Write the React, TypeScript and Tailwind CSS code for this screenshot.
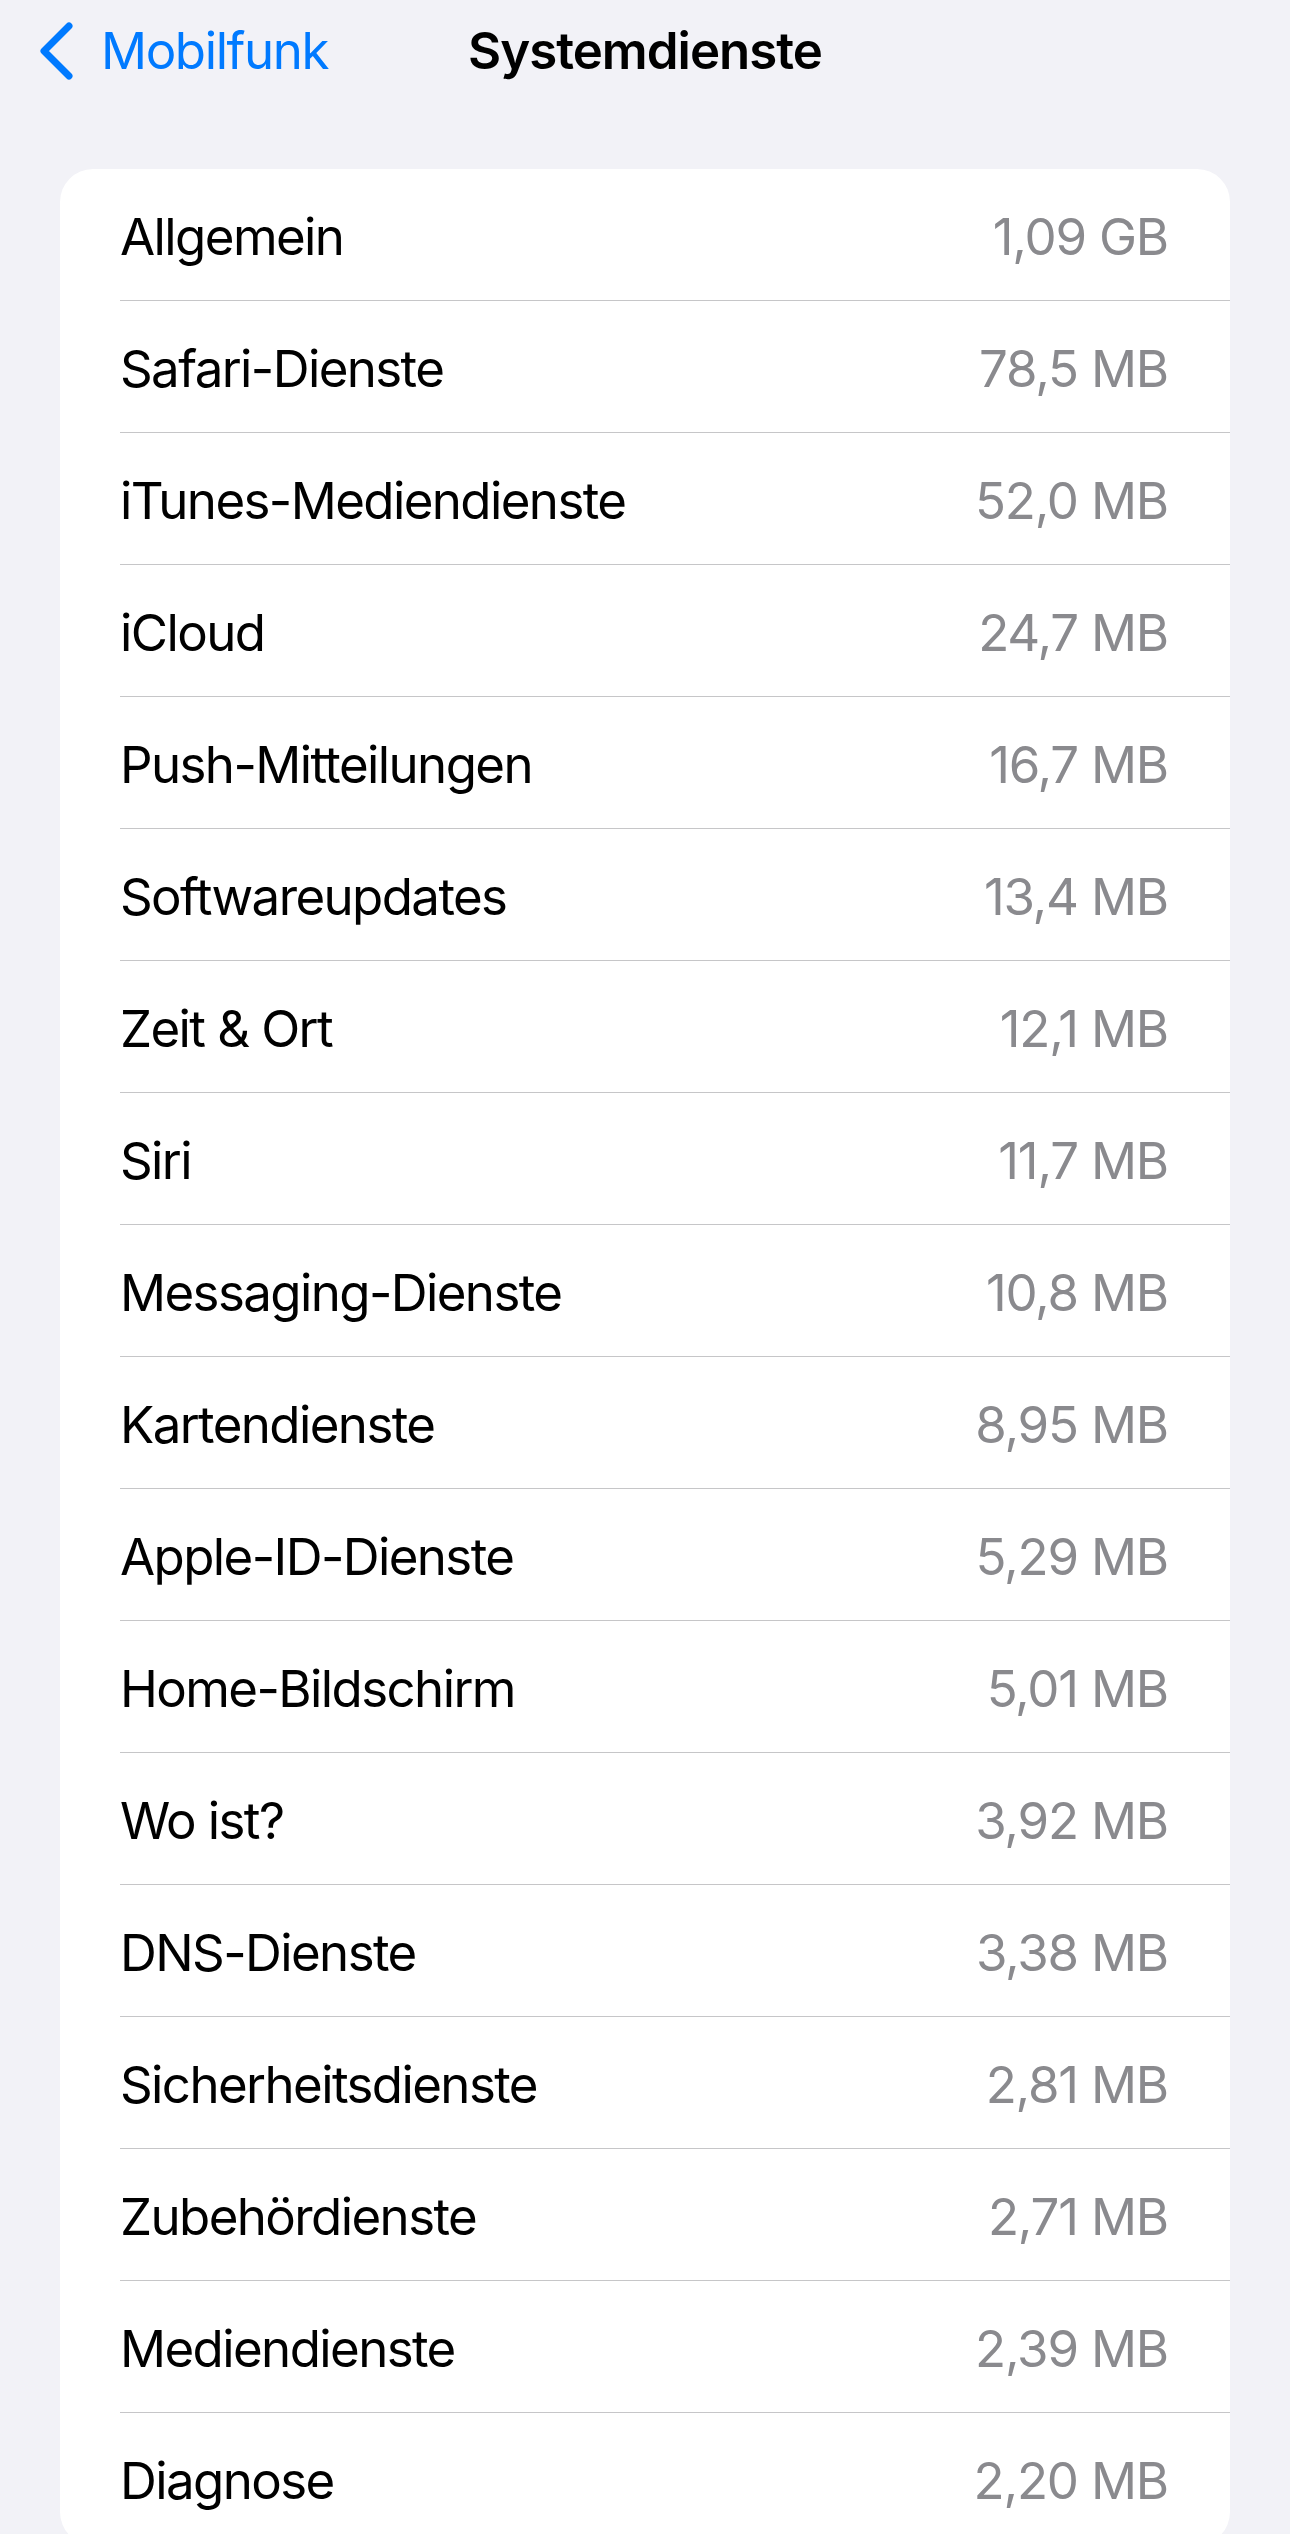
import React from "react";

const rows: [string, string][] = [
  ["Allgemein", "1,09 GB"],
  ["Safari-Dienste", "78,5 MB"],
  ["iTunes-Mediendienste", "52,0 MB"],
  ["iCloud", "24,7 MB"],
  ["Push-Mitteilungen", "16,7 MB"],
  ["Softwareupdates", "13,4 MB"],
  ["Zeit & Ort", "12,1 MB"],
  ["Siri", "11,7 MB"],
  ["Messaging-Dienste", "10,8 MB"],
  ["Kartendienste", "8,95 MB"],
  ["Apple-ID-Dienste", "5,29 MB"],
  ["Home-Bildschirm", "5,01 MB"],
  ["Wo ist?", "3,92 MB"],
  ["DNS-Dienste", "3,38 MB"],
  ["Sicherheitsdienste", "2,81 MB"],
  ["Zubehördienste", "2,71 MB"],
  ["Mediendienste", "2,39 MB"],
  ["Diagnose", "2,20 MB"],
];

export default function App() {
  return (
    <div
      className="w-[1290px] h-[2534px] overflow-hidden bg-[#f2f2f7] text-black"
      style={{ fontFamily: "Inter, 'Noto Sans', sans-serif" }}
    >
      <div className="pt-[20px] h-[80px] grid grid-cols-[1fr_auto_1fr] items-center">
        <div className="flex items-center">
          <svg width="40" height="60" viewBox="0 0 40 60" className="ml-[36px] shrink-0">
            <polyline
              points="33,5 8,30 33,55"
              fill="none"
              stroke="#007aff"
              strokeWidth="7"
              strokeLinecap="round"
              strokeLinejoin="round"
            />
          </svg>
          <span className="ml-[25px] text-[51px] leading-[61px] text-[#007aff] tracking-[-1.4px]">
            Mobilfunk
          </span>
        </div>
        <div className="text-[51px] leading-[61px] font-semibold tracking-[-1px]">
          Systemdienste
        </div>
        <div />
      </div>
      <div className="mt-[89px] ml-[60px] w-[1170px] bg-white rounded-[33px] overflow-hidden">
        {rows.map(([label, value], i) => (
          <div key={i} className="pl-[60px] h-[132px]">
            <div
              className={
                "h-full flex items-center justify-between pr-[62px] pt-[3px] " +
                (i < rows.length - 1 ? "border-b border-[#c6c6c8]" : "")
              }
            >
              <span className="text-[51px] leading-[61px] tracking-[-1.6px]">{label}</span>
              <span className="text-[51px] leading-[61px] tracking-[-1.2px] text-[#8a8a8e]">
                {value}
              </span>
            </div>
          </div>
        ))}
      </div>
    </div>
  );
}
